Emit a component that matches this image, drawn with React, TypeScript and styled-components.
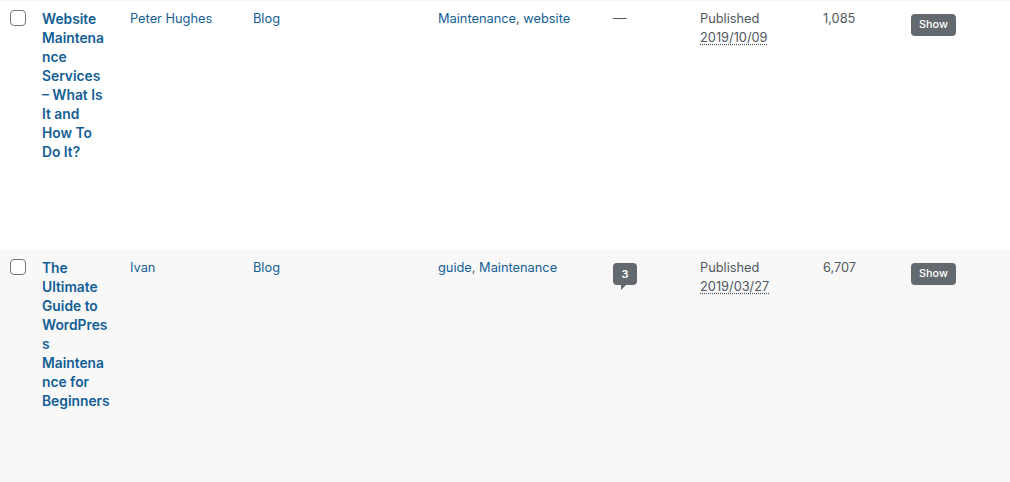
import React from "react";
import styled, { createGlobalStyle } from "styled-components";

const GlobalStyle = createGlobalStyle`
  html, body {
    margin: 0;
    height: 100%;
    overflow: hidden;
    background: #fff;
  }
`;

const Table = styled.table`
  width: 1010px;
  table-layout: fixed;
  border-collapse: collapse;
  border-top: 1px solid #f6f7f7;
  font-family: Inter, "Liberation Sans", sans-serif;
  font-size: 12.8px;
  line-height: 19px;
  color: #50575e;
`;

const Row = styled.tr<{ $alt?: boolean }>`
  height: 249px;
  background: ${p => (p.$alt ? "#f8f8f8" : "#fff")};

  & + & {
    height: 250px;
  }
`;

const Cell = styled.td`
  vertical-align: top;
  padding: 8px 10px;
  overflow-wrap: break-word;
  word-break: break-word;
`;

const TitleCell = styled(Cell)`
  padding-top: 9px;
`;

const CheckCell = styled.td`
  vertical-align: top;
  padding: 9px 0 0 10px;
`;

const Check = styled.span`
  display: block;
  width: 14px;
  height: 14px;
  background: #fff;
  border: 1px solid #6f7780;
  border-radius: 4px;
`;

const Title = styled.a`
  color: #135e96;
  font-weight: 600;
  font-size: 13.8px;
`;

const Link = styled.a`
  color: #135e96;
`;

const Abbr = styled.abbr`
  text-decoration: underline dotted;
  text-underline-offset: 2px;
`;

const NoComments = styled.span`
  display: block;
  margin-left: 1px;
  font-size: 13.5px;
`;

const Bubble = styled.span`
  position: relative;
  display: block;
  margin: 5px 0 0 1px;
  width: 24px;
  height: 22px;
  border-radius: 4px;
  background: #646970;
  color: #fff;
  font-size: 11px;
  font-weight: 600;
  line-height: 22px;
  text-align: center;

  &::after {
    content: "";
    position: absolute;
    left: 8px;
    top: 22px;
    border-top: 5px solid #646970;
    border-right: 5px solid transparent;
  }
`;

const ShowButton = styled.span`
  display: block;
  margin-top: 5px;
  width: 45px;
  height: 22px;
  border-radius: 4px;
  background: #646970;
  color: #fff;
  font-size: 10.8px;
  font-weight: 500;
  line-height: 22px;
  text-align: center;
`;

const posts = [
  {
    title: "Website Maintenance Services – What Is It and How To Do It?",
    author: "Peter Hughes",
    tags: ["Maintenance", "website"],
    comments: 0,
    date: "2019/10/09",
    views: "1,085",
  },
  {
    title: "The Ultimate Guide to WordPress Maintenance for Beginners",
    author: "Ivan",
    tags: ["guide", "Maintenance"],
    comments: 3,
    date: "2019/03/27",
    views: "6,707",
  },
];

export default function App() {
  return (
    <>
      <GlobalStyle />
      <Table>
        <colgroup>
          <col width={32} />
          <col width={88} />
          <col width={123} />
          <col width={185} />
          <col width={174} />
          <col width={88} />
          <col width={123} />
          <col width={88} />
          <col width={109} />
        </colgroup>
        <tbody>
          {posts.map((post, i) => (
            <Row key={post.date} $alt={i % 2 === 1}>
              <CheckCell>
                <Check />
              </CheckCell>
              <TitleCell>
                <Title>{post.title}</Title>
              </TitleCell>
              <Cell>
                <Link>{post.author}</Link>
              </Cell>
              <Cell>
                <Link>Blog</Link>
              </Cell>
              <Cell>
                <Link>{post.tags[0]}</Link>, <Link>{post.tags[1]}</Link>
              </Cell>
              <Cell>
                {post.comments ? <Bubble>{post.comments}</Bubble> : <NoComments>—</NoComments>}
              </Cell>
              <Cell>
                Published
                <br />
                <Abbr>{post.date}</Abbr>
              </Cell>
              <Cell>{post.views}</Cell>
              <Cell>
                <ShowButton>Show</ShowButton>
              </Cell>
            </Row>
          ))}
        </tbody>
      </Table>
    </>
  );
}
